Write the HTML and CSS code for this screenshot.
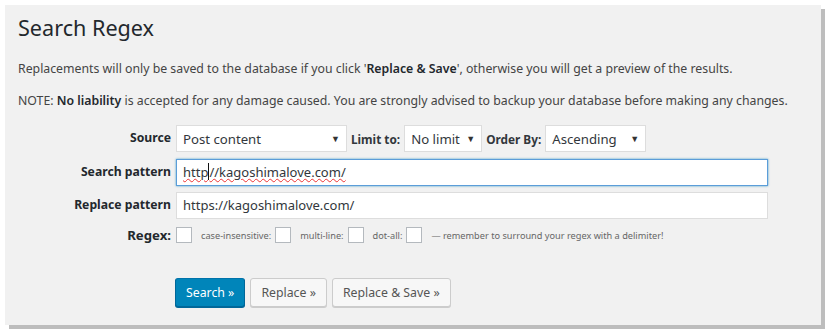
FILE: index.html
```html
<!DOCTYPE html>
<html>
<head>
    <title>Search Regex</title>
    <link rel="stylesheet" href="styles.css">
</head>
<body>
    <div class="wrap">
        <h1>Search Regex</h1>

        <p class="note">Replacements will only be saved to the database if you click '<strong>Replace &amp; Save</strong>', otherwise you will get a preview of the results.</p>
        <p class="note">NOTE: <strong>No liability</strong> is accepted for any damage caused. You are strongly advised to backup your database before making any changes.</p>

        <form class="search-form">
            <div class="row first">
                <label class="label">Source</label>
                <div class="field inline">
                    <div class="select source">Post content <span class="caret">&#9660;</span></div>
                    <span class="sub-label">Limit to:</span>
                    <div class="select limit">No limit <span class="caret">&#9660;</span></div>
                    <span class="sub-label">Order By:</span>
                    <div class="select order">Ascending <span class="caret">&#9660;</span></div>
                </div>
            </div>
            <div class="row">
                <label class="label">Search pattern</label>
                <div class="field">
                    <div class="text-input focused"><span class="typo">http</span><span class="cursor"></span><span class="typo">//kagoshimalove.com/</span></div>
                </div>
            </div>
            <div class="row">
                <label class="label">Replace pattern</label>
                <div class="field">
                    <div class="text-input">https://kagoshimalove.com/</div>
                </div>
            </div>
            <div class="row regex-row">
                <label class="label">Regex:</label>
                <div class="field inline small">
                    <span class="checkbox"></span>
                    <span class="opt">case-insensitive:</span>
                    <span class="checkbox"></span>
                    <span class="opt">multi-line:</span>
                    <span class="checkbox"></span>
                    <span class="opt">dot-all:</span>
                    <span class="checkbox"></span>
                    <span class="opt hint">&mdash; remember to surround your regex with a delimiter!</span>
                </div>
            </div>

            <div class="buttons">
                <button type="button" class="button primary">Search &raquo;</button>
                <button type="button" class="button">Replace &raquo;</button>
                <button type="button" class="button">Replace &amp; Save &raquo;</button>
            </div>
        </form>
    </div>
</body>
</html>
```

FILE: styles.css
```css
body {
    font-family: 'Noto Sans', 'Open Sans', sans-serif;
    margin: 0;
    padding: 5px 7px 4px 5px;
    background: #fff;
    color: #444;
}
.wrap {
    background: #f1f1f1;
    padding: 8px 13px 16px 13px;
    height: 296px;
    box-shadow: 4px 4px 0 #bdbdbd;
}
h1 {
    font-size: 21.6px;
    font-weight: 400;
    color: #23282d;
    margin: 0 0 16px 0;
    line-height: 30px;
}
.note {
    font-size: 12.3px;
    margin: 0 0 13px 0;
    line-height: 19px;
}
.note strong {
    color: #23282d;
    font-weight: 600;
}
.search-form {
    margin-top: 15px;
}
.row {
    display: flex;
    align-items: flex-start;
    margin-bottom: 6px;
}
.row + .row {
    margin-top: 1px;
}
.row.first {
    margin-bottom: 7px;
}
.label {
    width: 153px;
    text-align: right;
    font-weight: 700;
    font-size: 12.2px;
    color: #23282d;
    padding-right: 5px;
    padding-top: 4px;
}
.field {
    flex: 1;
}
.field.inline {
    display: flex;
    align-items: center;
    gap: 4px;
}
.select {
    height: 27px;
    box-sizing: border-box;
    background: #fff;
    border: 1px solid #ddd;
    font-size: 13.2px;
    color: #32373c;
    padding: 3px 6px;
    display: flex;
    justify-content: space-between;
    align-items: center;
}
.caret {
    font-size: 9px;
    color: #333;
}
.select.source { width: 171px; }
.select.limit { width: 78px; }
.select.order { width: 101px; }
.sub-label {
    font-size: 11.8px;
    font-weight: 700;
    color: #32373c;
}
.text-input {
    width: 592px;
    height: 27px;
    box-sizing: border-box;
    background: #fff;
    border: 1px solid #ddd;
    font-size: 13px;
    line-height: 20px;
    color: #32373c;
    padding: 2px 6px;
}
.text-input.focused {
    border-color: #5b9dd9;
    box-shadow: 0 0 2px rgba(30, 140, 190, 0.8);
}
.typo {
    text-decoration: underline wavy #e33;
    text-decoration-thickness: 1px;
}
.cursor {
    display: inline-block;
    width: 1px;
    height: 17px;
    background: #111;
    vertical-align: -3px;
}
.regex-row .label {
    padding-top: 1px;
    font-size: 13.2px;
}
.small {
    font-size: 9.2px;
    gap: 3px;
    padding-top: 2px;
}
.checkbox {
    width: 16px;
    height: 16px;
    box-sizing: border-box;
    background: #fff;
    border: 1px solid #b4b9be;
}
.opt {
    color: #666;
    margin: 0 0 0 5px;
}
.buttons {
    display: flex;
    gap: 5px;
    margin: 34px 0 0 157px;
}
.button {
    font-family: inherit;
    font-size: 12.3px;
    height: 29px;
    padding: 0 10px;
    border: 1px solid #ccc;
    border-radius: 3px;
    background: #f7f7f7;
    color: #555;
    box-shadow: 0 1px 0 #ccc;
}
.button.primary {
    background: #0085ba;
    border-color: #0073aa #006799 #006799;
    color: #fff;
    box-shadow: 0 1px 0 #006799;
}
```
